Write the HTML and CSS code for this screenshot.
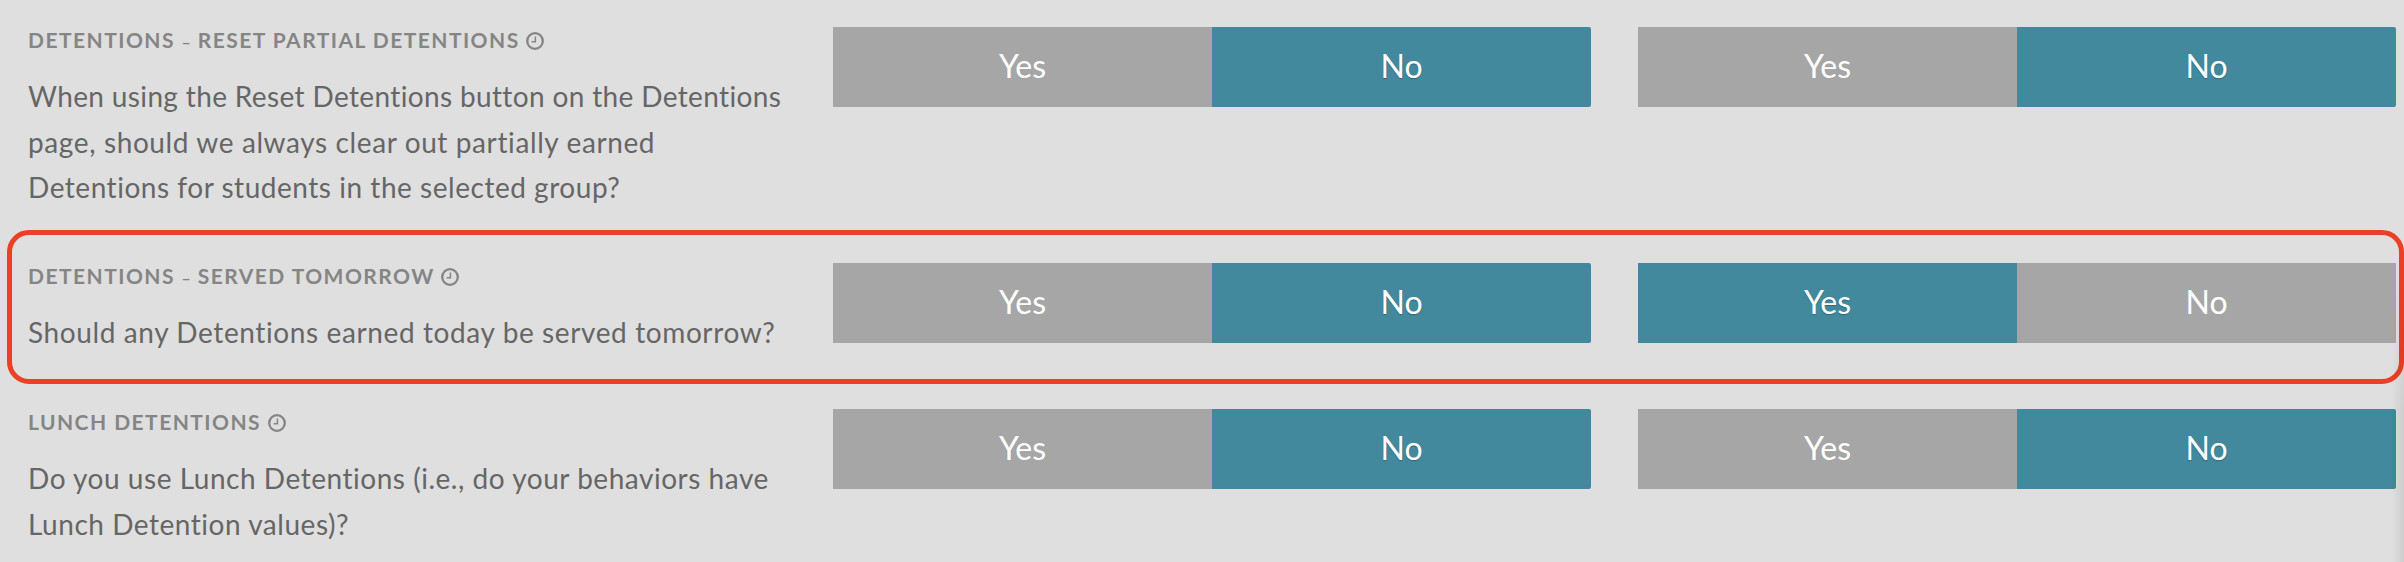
FILE: index.html
```
<!DOCTYPE html>
<html lang="en">
<head>
  <meta charset="utf-8">
  <title>Detention Settings</title>
  <link rel="stylesheet" href="styles.css">
</head>
<body>
  <div class="settings">
    <div class="setting-row reset-row">
      <div class="setting-info">
        <div class="setting-title">DETENTIONS <span class="dash">–</span> RESET PARTIAL DETENTIONS
          <svg class="clock-icon" viewBox="0 0 18 18"><circle cx="9" cy="9" r="7.8"/><path d="M9.4 4.5v5.2H5.6"/></svg>
        </div>
        <div class="setting-description"><span class="tight">When using the Reset Detentions button on the Detentions</span><br><span class="loose">page, should we always clear out partially earned</span><br>Detentions for students in the selected group?</div>
      </div>
      <div class="toggle-group">
        <div class="toggle-option">Yes</div>
        <div class="toggle-option active">No</div>
      </div>
      <div class="toggle-group">
        <div class="toggle-option">Yes</div>
        <div class="toggle-option active">No</div>
      </div>
    </div>

    <div class="setting-row highlighted">
      <div class="setting-info">
        <div class="setting-title">DETENTIONS <span class="dash">–</span> SERVED TOMORROW
          <svg class="clock-icon" viewBox="0 0 18 18"><circle cx="9" cy="9" r="7.8"/><path d="M9.4 4.5v5.2H5.6"/></svg>
        </div>
        <div class="setting-description"><span class="loose">Should any Detentions earned today be served tomorrow?</span></div>
      </div>
      <div class="toggle-group">
        <div class="toggle-option">Yes</div>
        <div class="toggle-option active">No</div>
      </div>
      <div class="toggle-group">
        <div class="toggle-option active">Yes</div>
        <div class="toggle-option">No</div>
      </div>
    </div>

    <div class="setting-row lunch-row">
      <div class="setting-info">
        <div class="setting-title">LUNCH DETENTIONS
          <svg class="clock-icon" viewBox="0 0 18 18"><circle cx="9" cy="9" r="7.8"/><path d="M9.4 4.5v5.2H5.6"/></svg>
        </div>
        <div class="setting-description">Do you use Lunch Detentions (i.e., do your behaviors have<br>Lunch Detention values)?</div>
      </div>
      <div class="toggle-group">
        <div class="toggle-option">Yes</div>
        <div class="toggle-option active">No</div>
      </div>
      <div class="toggle-group">
        <div class="toggle-option">Yes</div>
        <div class="toggle-option active">No</div>
      </div>
    </div>
  </div>
  <div class="edge-shadow"></div>
</body>
</html>
```
FILE: styles.css
```
* {
  box-sizing: border-box;
}

body {
  margin: 0;
  height: 562px;
  overflow: hidden;
  position: relative;
  background: #dfdfdf;
  font-family: Lato, "Open Sans", sans-serif;
}

.settings {
  display: flex;
  flex-direction: column;
}

.setting-row {
  display: grid;
  grid-template-columns: 758px 758px 758px;
  column-gap: 47px;
  align-items: start;
  padding-left: 28px;
}

.reset-row {
  height: 230px;
  padding-top: 27px;
}

.highlighted {
  height: 154px;
  margin-left: 7px;
  padding: 28px 0 0 16px;
  border: 5px solid #eb4025;
  border-radius: 22px;
}

.lunch-row {
  padding-top: 25px;
}

.setting-title {
  height: 26px;
  line-height: 26px;
  font-size: 21px;
  font-weight: 700;
  letter-spacing: 1.45px;
  color: #858585;
  white-space: nowrap;
}

.dash {
  font-size: 16px;
  letter-spacing: 0.5px;
}

.clock-icon {
  width: 18px;
  height: 18px;
  vertical-align: -2px;
  fill: none;
  stroke: #858585;
  stroke-width: 2.3;
}

.clock-icon path {
  stroke-width: 1.5;
}

.setting-description {
  margin-top: 21px;
  line-height: 45.6px;
  font-size: 28px;
  letter-spacing: 0.53px;
  color: #666;
  white-space: nowrap;
}

.tight {
  letter-spacing: 0.36px;
}

.loose {
  letter-spacing: 0.61px;
}

.toggle-group {
  display: flex;
  height: 80px;
}

.toggle-option {
  flex: 1;
  background: #a6a6a6;
  color: #fff;
  font-size: 32px;
  line-height: 78px;
  text-align: center;
}

.toggle-option.active {
  background: #42899e;
  text-shadow: 0 1px 1px rgba(0, 0, 0, 0.25);
}

.toggle-option.active:last-child {
  border-radius: 0 2px 2px 0;
}

/* soft shade along the right side of the panel */
.edge-shadow {
  position: absolute;
  top: 260px;
  right: 0;
  bottom: 0;
  width: 12px;
  background: linear-gradient(to right, rgba(0, 0, 0, 0), rgba(0, 0, 0, 0.08));
  -webkit-mask-image: linear-gradient(transparent, #000 150px);
  mask-image: linear-gradient(transparent, #000 150px);
  pointer-events: none;
}
```
